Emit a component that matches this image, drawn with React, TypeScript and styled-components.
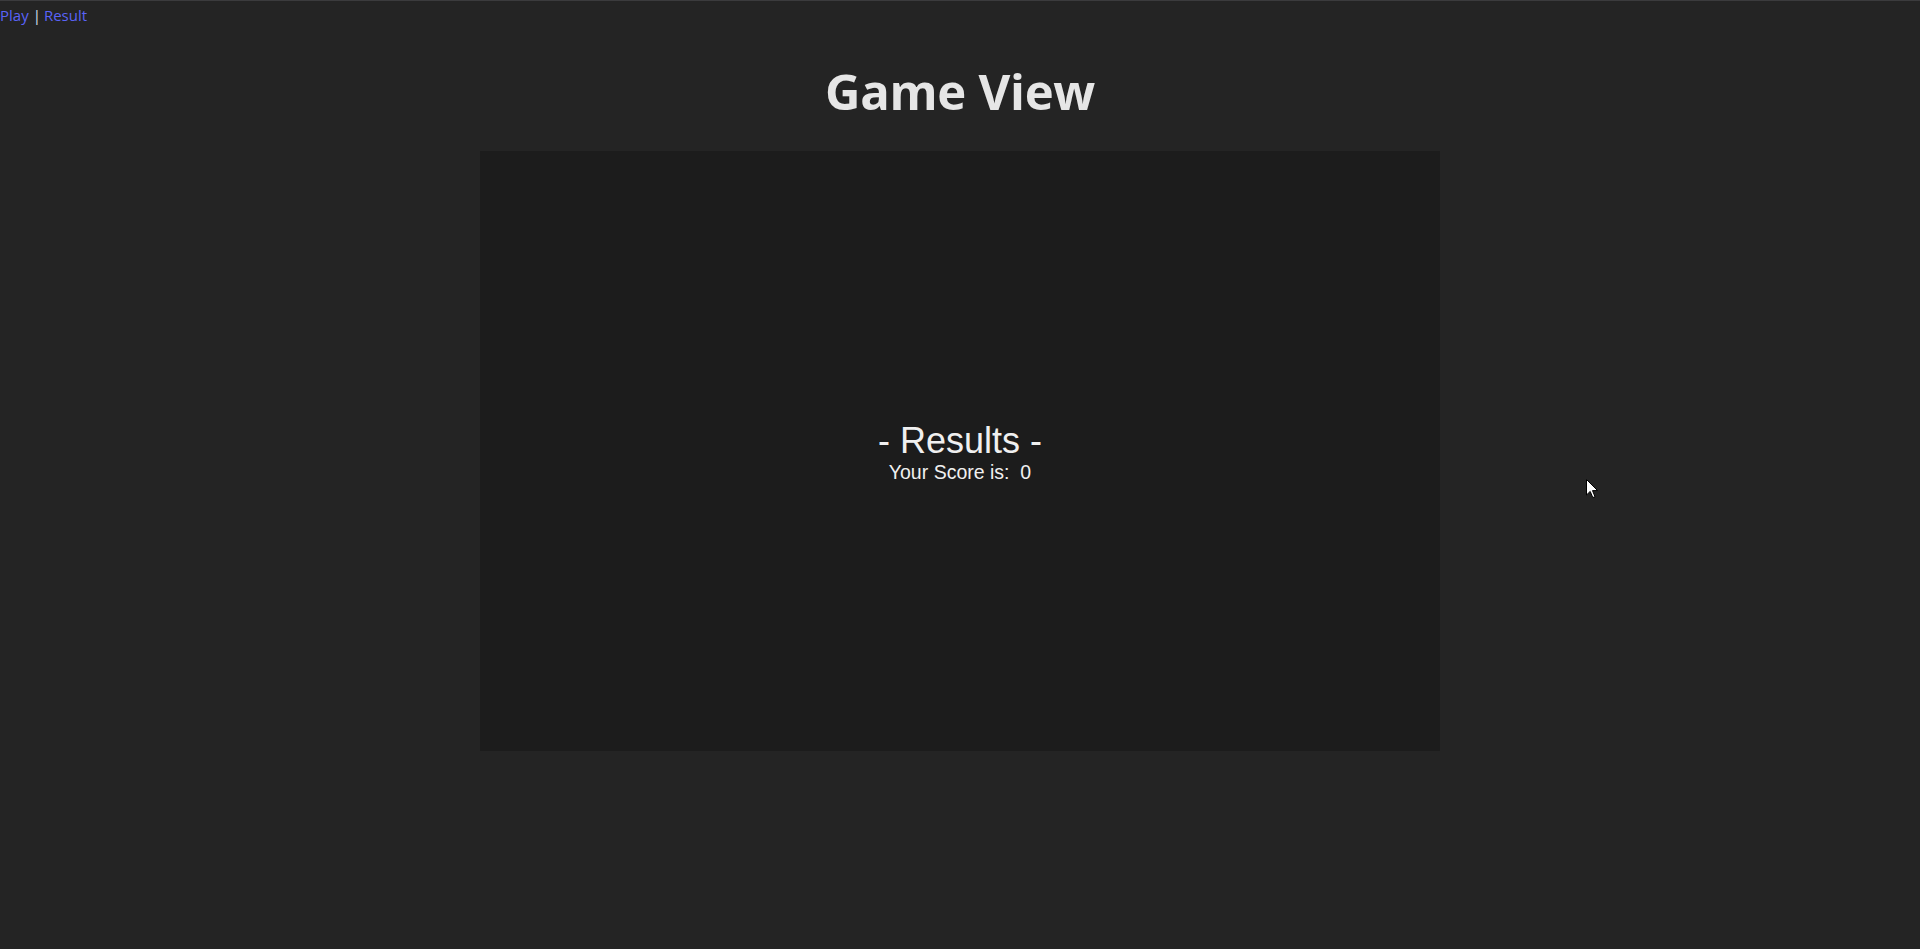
import React from "react";
import styled, { createGlobalStyle } from "styled-components";

const GlobalStyle = createGlobalStyle`
  html, body {
    margin: 0;
    padding: 0;
    background: #242424;
  }
  body {
    font-family: "Open Sans", "Noto Sans", sans-serif;
    color: rgba(255, 255, 255, 0.87);
    line-height: 1.5;
  }
`;

const Page = styled.div`
  position: relative;
  min-height: 949px;
  border-top: 1px solid #3b3b3d;
  box-sizing: border-box;
  display: flex;
  flex-direction: column;
`;

const Nav = styled.nav`
  display: flex;
  align-items: center;
  height: 23px;
  padding-top: 3px;
  font-size: 15px;
  line-height: 23px;
  white-space: pre;
`;

const NavLink = styled.a`
  color: #5a63f8;
  font-weight: 500;
  text-decoration: none;
  cursor: pointer;
`;

const Sep = styled.span`
  color: #d6e2f0;
  margin: 0 3px 0 4px;
`;

const Main = styled.main`
  display: flex;
  flex-direction: column;
  align-items: center;
`;

const Title = styled.h1`
  margin: 36px 0 0;
  height: 88px;
  font-size: 49px;
  font-weight: 700;
  line-height: 56px;
  color: #e6e6e6;
  letter-spacing: -0.3px;
`;

const GameCanvas = styled.div`
  width: 960px;
  height: 600px;
  background: #1c1c1c;
  display: flex;
  flex-direction: column;
  align-items: center;
  justify-content: center;
  font-family: "Liberation Sans", Arial, sans-serif;
  color: #f0f0f0;
`;

const ResultsBlock = styled.div`
  display: flex;
  flex-direction: column;
  align-items: center;
  margin-top: 5px;
`;

const ResultsTitle = styled.div`
  font-size: 36px;
  line-height: 36px;
  white-space: pre;
`;

const ScoreLine = styled.div`
  font-size: 19.5px;
  line-height: 26px;
  white-space: pre;
`;

const Cursor = styled.svg`
  position: absolute;
  left: 1586px;
  top: 478px;
  width: 13px;
  height: 20px;
`;

export default function App() {
  return (
    <>
      <GlobalStyle />
      <Page>
        <Nav>
          <NavLink>Play</NavLink>
          <Sep>|</Sep>
          <NavLink>Result</NavLink>
        </Nav>
        <Main>
          <Title>Game View</Title>
          <GameCanvas>
            <ResultsBlock>
              <ResultsTitle>- Results -</ResultsTitle>
              <ScoreLine>{"Your Score is:  0"}</ScoreLine>
            </ResultsBlock>
          </GameCanvas>
        </Main>
        <Cursor viewBox="0 0 13 20">
          <path
            d="M0.5 0.5 L0.5 16 L4.2 12.4 L6.8 18.6 L9 17.7 L6.5 11.6 L11.6 11.6 Z"
            fill="#ffffff"
            stroke="#000000"
            strokeWidth="1"
            strokeLinejoin="miter"
          />
        </Cursor>
      </Page>
    </>
  );
}
